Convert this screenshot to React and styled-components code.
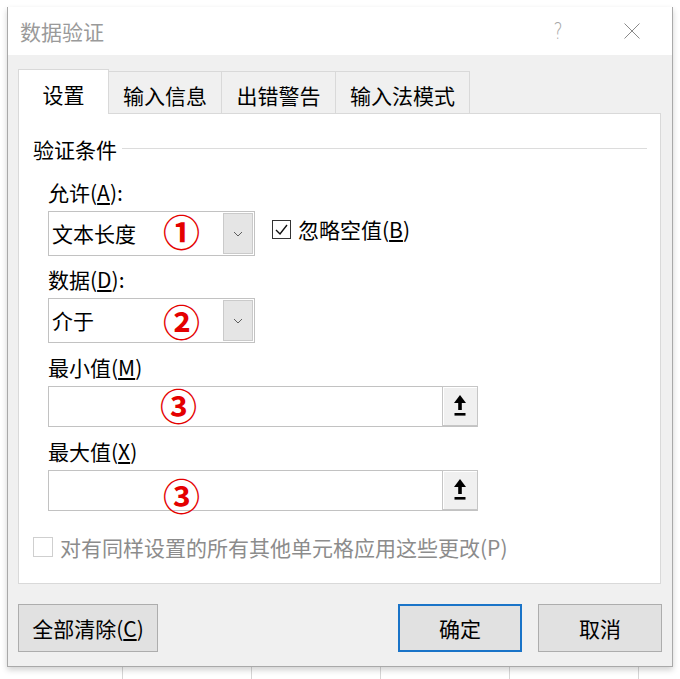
import React from "react";
import styled, { createGlobalStyle } from "styled-components";

const Global = createGlobalStyle`
  html, body { margin: 0; padding: 0; background: #ffffff; }
  body { font-family: "Noto Sans CJK SC", "Noto Sans", sans-serif; color: #000; }
  #root { width: 680px; height: 679px; overflow: hidden; }
`;

const Page = styled.div`
  width: 680px;
  height: 679px;
  display: flex;
  flex-direction: column;
  background: #fff;
`;

const Dialog = styled.div`
  margin: 7px 7px 0 7px;
  width: 666px;
  height: 660px;
  box-sizing: border-box;
  border-left: 1px solid #a9a9a9;
  border-right: 1px solid #a9a9a9;
  border-bottom: 1px solid #a9a9a9;
  box-shadow: 0 3px 6px rgba(0, 0, 0, 0.18);
  display: flex;
  flex-direction: column;
  position: relative;
  z-index: 1;
  background: #f0f0f0;
`;

const TitleBar = styled.div`
  height: 49px;
  background: #fff;
  display: flex;
  align-items: center;
  padding: 0 32px 0 12px;
`;

const Title = styled.div`
  font-size: 21px;
  line-height: 1;
  color: #9a9a9a;
  flex: 1;
`;

const Help = styled.div`
  font-family: "DejaVu Sans", sans-serif;
  font-size: 23px;
  font-weight: 200;
  color: #a8a8a8;
  line-height: 1;
  margin-right: 60px;
  transform: scaleX(0.75);
`;

const Body = styled.div`
  flex: 1;
  display: flex;
  flex-direction: column;
  padding: 14px 11px 14px 10px;
`;

const TabRow = styled.div`
  display: flex;
  align-items: flex-end;
  height: 45px;
`;

const Tab = styled.div`
  box-sizing: border-box;
  width: ${(p) => p.$w}px;
  height: ${(p) => (p.$active ? 45 : 42)}px;
  margin-bottom: ${(p) => (p.$active ? 0 : 1)}px;
  margin-left: ${(p) => (p.$first ? 0 : -1)}px;
  border: 1px solid #d9d9d9;
  border-bottom: none;
  background: ${(p) => (p.$active ? "#fff" : "#f0f0f0")};
  position: relative;
  z-index: ${(p) => (p.$active ? 2 : 1)};
  display: flex;
  justify-content: center;
  align-items: center;
  padding-top: ${(p) => (p.$active ? 4 : 6)}px;
  font-size: 21px;
  line-height: 1;
`;

const Panel = styled.div`
  margin-top: -1px;
  height: 471px;
  box-sizing: border-box;
  background: #fff;
  border: 1px solid #d9d9d9;
  padding: 20px 0 0 14px;
  display: flex;
  flex-direction: column;
`;

const GroupHeader = styled.div`
  display: flex;
  align-items: center;
  height: 30px;
  font-size: 21px;
  line-height: 1;
`;

const GroupLine = styled.div`
  flex: 1;
  height: 1px;
  background: #dcdcdc;
  margin: 0 13px 0 5px;
  transform: translateY(-1px);
`;

const Fields = styled.div`
  display: flex;
  flex-direction: column;
  padding-left: 15px;
  margin-top: 13px;
`;

const Label = styled.div`
  height: 30px;
  display: flex;
  align-items: center;
  font-size: 21px;
  line-height: 1;
  margin-top: ${(p) => p.$mt || 0}px;
  margin-bottom: 4px;
  u { text-underline-offset: 2px; }
`;

const Row = styled.div`
  display: flex;
  align-items: center;
`;

const Combo = styled.div`
  position: relative;
  box-sizing: border-box;
  width: 207px;
  height: 45px;
  border: 1px solid #c2c2c2;
  background: #fff;
  display: flex;
  align-items: center;
  padding: 0 1px 0 3px;
  font-size: 21px;
  line-height: 1;
`;

const ComboText = styled.div`
  flex: 1;
`;

const DropButton = styled.div`
  box-sizing: border-box;
  width: 30px;
  height: 41px;
  background: #e5e5e5;
  border: 1px solid #cacaca;
  display: flex;
  align-items: center;
  justify-content: center;
`;

const TextInput = styled.div`
  position: relative;
  box-sizing: border-box;
  width: 430px;
  height: 41px;
  border: 1px solid #c2c2c2;
  border-right: 1px solid #c8c8c8;
  background: #fff;
  display: flex;
  justify-content: flex-end;
`;

const RefButton = styled.div`
  box-sizing: border-box;
  width: 36px;
  height: 40px;
  margin-top: -1px;
  margin-right: -1px;
  background: #f0f0f0;
  border: 1px solid #c6c6c6;
  box-shadow: inset 1px 1px 0 #fff;
  display: flex;
  align-items: center;
  justify-content: center;
`;

const Mark = styled.span`
  position: absolute;
  left: ${(p) => p.$x}px;
  top: ${(p) => p.$y}px;
  font-family: "Noto Sans CJK SC", sans-serif;
  font-size: 37px;
  font-weight: 700;
  line-height: 37px;
  color: #e40000;
  pointer-events: none;
`;

const CheckWrap = styled.label`
  display: flex;
  align-items: center;
  margin-left: 17px;
  margin-bottom: 9px;
  font-size: 21px;
  line-height: 1;
  color: ${(p) => (p.$disabled ? "#8c8c8c" : "#000")};
  u { text-underline-offset: 2px; }
`;

const Box = styled.span`
  box-sizing: border-box;
  width: ${(p) => p.$size}px;
  height: ${(p) => p.$size}px;
  border: 1px solid ${(p) => (p.$disabled ? "#cfcfcf" : "#333")};
  background: #fff;
  display: flex;
  align-items: center;
  justify-content: center;
  margin-right: 7px;
`;

const ApplyRow = styled.div`
  display: flex;
  align-items: center;
  margin-top: 26px;
  height: 20px;
`;

const Footer = styled.div`
  display: flex;
  justify-content: space-between;
  margin-top: 20px;
  margin-right: -1px;
`;

const ButtonGroup = styled.div`
  display: flex;
  gap: 16px;
`;

const Button = styled.div`
  box-sizing: border-box;
  width: ${(p) => p.$w}px;
  height: 48px;
  background: #e1e1e1;
  border: ${(p) => (p.$primary ? "2px solid #1a74c8" : "1px solid #adadad")};
  display: flex;
  align-items: center;
  justify-content: center;
  font-size: 21px;
  line-height: 1;
  u { text-underline-offset: 2px; }
`;

const SheetStrip = styled.div`
  flex: 1;
  display: flex;
  padding-left: 122px;
`;

const SheetCell = styled.div`
  width: 128px;
  flex-shrink: 0;
  border-left: 1px solid #d6d6d6;
`;

const Chevron = () => (
  <svg width="10" height="6" viewBox="0 0 10 6">
    <polyline points="1,1 5,5 9,1" fill="none" stroke="#5e5e5e" strokeWidth="1" />
  </svg>
);

const RefIcon = () => (
  <svg width="16" height="22" viewBox="0 0 16 22">
    <polygon points="8,0 14,8 2,8" fill="#000" />
    <rect x="6.2" y="7" width="3.6" height="8" fill="#000" />
    <rect x="2.5" y="18" width="11" height="2.6" fill="#000" />
  </svg>
);

const CloseIcon = () => (
  <svg width="16" height="16" viewBox="0 0 16 16">
    <line x1="0.5" y1="0.5" x2="15.5" y2="15.5" stroke="#8a8a8a" strokeWidth="1" />
    <line x1="15.5" y1="0.5" x2="0.5" y2="15.5" stroke="#8a8a8a" strokeWidth="1" />
  </svg>
);

const CheckMark = () => (
  <svg width="15" height="13" viewBox="0 0 15 13">
    <polyline points="2,7 6,11 13,2" fill="none" stroke="#111" strokeWidth="1.4" />
  </svg>
);

const tabs = [
  { label: "设置", w: 91, active: true },
  { label: "输入信息", w: 114 },
  { label: "出错警告", w: 115 },
  { label: "输入法模式", w: 135 },
];

export default function App() {
  return (
    <>
      <Global />
      <Page>
        <Dialog>
          <TitleBar>
            <Title>数据验证</Title>
            <Help>?</Help>
            <CloseIcon />
          </TitleBar>
          <Body>
            <TabRow>
              {tabs.map((t, i) => (
                <Tab key={t.label} $w={t.w} $active={t.active} $first={i === 0}>
                  {t.label}
                </Tab>
              ))}
            </TabRow>
            <Panel>
              <GroupHeader>
                验证条件
                <GroupLine />
              </GroupHeader>
              <Fields>
                <Label>
                  允许(<u>A</u>):
                </Label>
                <Row>
                  <Combo>
                    <ComboText>文本长度</ComboText>
                    <DropButton>
                      <Chevron />
                    </DropButton>
                    <Mark $x={114} $y={1}>①</Mark>
                  </Combo>
                  <CheckWrap>
                    <Box $size={19}>
                      <CheckMark />
                    </Box>
                    忽略空值(<u>B</u>)
                  </CheckWrap>
                </Row>
                <Label $mt={8}>
                  数据(<u>D</u>):
                </Label>
                <Combo>
                  <ComboText>介于</ComboText>
                  <DropButton>
                    <Chevron />
                  </DropButton>
                  <Mark $x={114} $y={4}>②</Mark>
                </Combo>
                <Label $mt={9}>
                  最小值(<u>M</u>)
                </Label>
                <TextInput>
                  <RefButton>
                    <RefIcon />
                  </RefButton>
                  <Mark $x={111} $y={0}>③</Mark>
                </TextInput>
                <Label $mt={9}>
                  最大值(<u>X</u>)
                </Label>
                <TextInput>
                  <RefButton>
                    <RefIcon />
                  </RefButton>
                  <Mark $x={114} $y={6}>③</Mark>
                </TextInput>
              </Fields>
              <ApplyRow>
                <CheckWrap as="div" $disabled style={{ marginLeft: 0, marginBottom: 0 }}>
                  <Box $size={20} $disabled />
                  对有同样设置的所有其他单元格应用这些更改(P)
                </CheckWrap>
              </ApplyRow>
            </Panel>
            <Footer>
              <Button $w={140}>
                全部清除(<u>C</u>)
              </Button>
              <ButtonGroup>
                <Button $w={124} $primary>
                  确定
                </Button>
                <Button $w={124}>取消</Button>
              </ButtonGroup>
            </Footer>
          </Body>
        </Dialog>
        <SheetStrip>
          {[0, 1, 2, 3, 4].map((i) => (
            <SheetCell key={i} />
          ))}
        </SheetStrip>
      </Page>
    </>
  );
}
